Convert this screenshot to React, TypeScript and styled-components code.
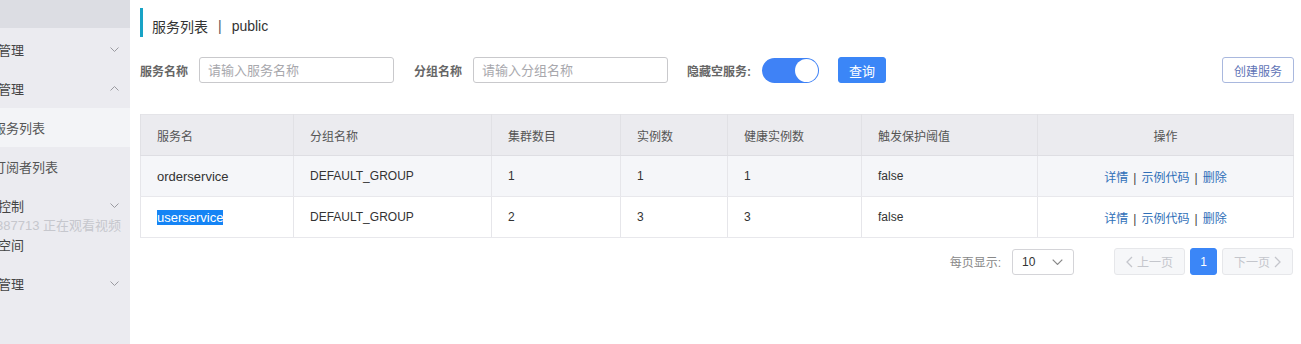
import styled, { createGlobalStyle } from "styled-components";

const GlobalStyle = createGlobalStyle`
  body {
    margin: 0;
    font-family: "Liberation Sans", "Noto Sans CJK SC", sans-serif;
    background: #fff;
  }
`;

const Page = styled.div`
  display: flex;
  height: 344px;
  overflow: hidden;
`;

const Sidebar = styled.div`
  position: relative;
  width: 130px;
  flex-shrink: 0;
  background: #ebebf0;
  overflow: hidden;
`;

const SideTop = styled.div`
  height: 28px;
  margin-bottom: 2px;
  background: #dcdde3;
`;

const MenuItem = styled.div<{ $sub?: boolean; $active?: boolean }>`
  height: 39px;
  display: flex;
  align-items: center;
  justify-content: space-between;
  padding-right: 11px;
  margin-left: ${(p) => (p.$sub ? "-7px" : "-28px")};
  background: ${(p) => (p.$active ? "#f3f4f7" : "transparent")};
  color: ${(p) => (p.$sub ? "#555" : "#444")};
  font-size: 13px;
  white-space: nowrap;
`;

const Watermark = styled.div`
  position: absolute;
  left: -4px;
  top: 215px;
  font-size: 13px;
  color: #c6c7cd;
  white-space: nowrap;
`;

const Main = styled.div`
  flex: 1;
  padding: 8px 7px 0 10px;
  min-width: 0;
`;

const Title = styled.div`
  height: 29px;
  box-sizing: border-box;
  padding: 6px 0 0 9px;
  display: flex;
  align-items: center;
  border-left: 3px solid #18a3c6;
  font-size: 14px;
  color: #333;
`;

const Sep = styled.span`
  margin: 0 10px;
  color: #555;
`;

const FilterRow = styled.div`
  display: flex;
  align-items: center;
  height: 26px;
  margin-top: 20px;
`;

const Label = styled.span<{ $gap?: number }>`
  font-size: 12px;
  font-weight: bold;
  color: #666;
  margin-left: ${(p) => p.$gap ?? 0}px;
  margin-right: 11px;
  white-space: nowrap;
`;

const Input = styled.input`
  width: 195px;
  height: 26px;
  box-sizing: border-box;
  border: 1px solid #c9c9cc;
  border-radius: 3px;
  padding: 0 8px;
  font-size: 13px;
  font-family: inherit;
  outline: none;
  &::placeholder {
    color: #a8a8ad;
  }
`;

const Switch = styled.div`
  width: 57px;
  height: 25px;
  box-sizing: border-box;
  border-radius: 13px;
  background: #3f82f6;
  display: flex;
  justify-content: flex-end;
  align-items: center;
  padding-right: 1px;
`;

const Knob = styled.div`
  width: 23px;
  height: 23px;
  border-radius: 50%;
  background: #fff;
`;

const Button = styled.button<{ $outline?: boolean }>`
  height: 26px;
  box-sizing: border-box;
  border-radius: 3px;
  font-size: 12px;
  font-family: inherit;
  padding: 0;
  cursor: pointer;
  background: ${(p) => (p.$outline ? "#fff" : "#3b86f7")};
  color: ${(p) => (p.$outline ? "#5f74b6" : "#fff")};
  border: 1px solid ${(p) => (p.$outline ? "#a9b8de" : "#3b86f7")};
`;

const SearchButton = styled(Button)`
  width: 48px;
  margin-left: 19px;
  font-size: 13px;
`;

const CreateButton = styled(Button)`
  width: 72px;
  margin-left: auto;
`;

const Table = styled.table`
  width: 100%;
  margin-top: 31px;
  border-collapse: collapse;
  table-layout: fixed;
  border: 1px solid #e4e4e8;
  font-size: 12px;
`;

const Th = styled.th<{ $center?: boolean }>`
  height: 40px;
  background: #ebebef;
  color: #555;
  font-weight: normal;
  text-align: ${(p) => (p.$center ? "center" : "left")};
  padding: 0 16px;
  border-left: 1px solid #e1e1e5;
  border-bottom: 1px solid #dedee3;
`;

const Tr = styled.tr<{ $hover?: boolean }>`
  background: ${(p) => (p.$hover ? "#f5f6f9" : "#fff")};
`;

const Td = styled.td<{ $center?: boolean }>`
  height: 40px;
  padding: 0 16px;
  color: #333;
  font-size: 12px;
  text-align: ${(p) => (p.$center ? "center" : "left")};
  border-left: 1px solid #e6e6ea;
  border-bottom: 1px solid #e8e8ec;
  white-space: nowrap;
`;

const NameCell = styled(Td)`
  font-size: 13px;
  padding-left: 16px;
`;

const Selected = styled.span`
  background: #1584f5;
  color: #fff;
`;

const Link = styled.a`
  color: #2f6fb8;
  text-decoration: none;
`;

const Bar = styled.span`
  color: #444;
  margin: 0 5px;
`;

const Pager = styled.div`
  display: flex;
  justify-content: flex-end;
  align-items: center;
  margin-top: 10px;
  padding-right: 1px;
`;

const PagerLabel = styled.span`
  font-size: 12px;
  color: #888;
  margin-right: 11px;
`;

const Select = styled.div`
  width: 62px;
  height: 26px;
  box-sizing: border-box;
  border: 1px solid #d4d4d8;
  border-radius: 3px;
  display: flex;
  align-items: center;
  justify-content: space-between;
  padding: 0 10px 0 9px;
  font-size: 12px;
  color: #333;
  margin-right: 35px;
`;

const PageButton = styled.div<{ $current?: boolean; $w: number }>`
  width: ${(p) => p.$w}px;
  height: 27px;
  box-sizing: border-box;
  margin-left: 5px;
  border-radius: 3px;
  display: flex;
  align-items: center;
  justify-content: center;
  gap: 4px;
  font-size: 12px;
  background: ${(p) => (p.$current ? "#3b86f7" : "#f6f7f9")};
  color: ${(p) => (p.$current ? "#fff" : "#c4c6cc")};
  border: 1px solid ${(p) => (p.$current ? "#3b86f7" : "#e6e7ea")};
`;

function Chevron({ up, color = "#9a9aa0", w = 9, h = 5 }: { up?: boolean; color?: string; w?: number; h?: number }) {
  return (
    <svg width={w} height={h} viewBox="0 0 9 5" fill="none">
      <polyline
        points={up ? "0.5,4.5 4.5,0.5 8.5,4.5" : "0.5,0.5 4.5,4.5 8.5,0.5"}
        stroke={color}
        strokeWidth="1"
      />
    </svg>
  );
}

function Arrow({ left }: { left?: boolean }) {
  return (
    <svg width="7" height="12" viewBox="0 0 7 12" fill="none">
      <polyline
        points={left ? "6,1 1,6 6,11" : "1,1 6,6 1,11"}
        stroke="#c4c6cc"
        strokeWidth="1.3"
      />
    </svg>
  );
}

const rows = [
  { name: "orderservice", group: "DEFAULT_GROUP", cluster: 1, inst: 1, healthy: 1, protect: "false", hover: true },
  { name: "userservice", group: "DEFAULT_GROUP", cluster: 2, inst: 3, healthy: 3, protect: "false", selected: true },
];

export default function App() {
  return (
    <>
      <GlobalStyle />
      <Page>
        <Sidebar>
          <SideTop />
          <MenuItem>
            <span>配置管理</span>
            <Chevron />
          </MenuItem>
          <MenuItem>
            <span>服务管理</span>
            <Chevron up />
          </MenuItem>
          <MenuItem $sub $active>
            <span>服务列表</span>
          </MenuItem>
          <MenuItem $sub>
            <span>订阅者列表</span>
          </MenuItem>
          <MenuItem>
            <span>权限控制</span>
            <Chevron />
          </MenuItem>
          <MenuItem>
            <span>命名空间</span>
          </MenuItem>
          <MenuItem>
            <span>集群管理</span>
            <Chevron />
          </MenuItem>
          <Watermark>387713 正在观看视频</Watermark>
        </Sidebar>
        <Main>
          <Title>
            服务列表<Sep>|</Sep>public
          </Title>
          <FilterRow>
            <Label>服务名称</Label>
            <Input placeholder="请输入服务名称" />
            <Label $gap={20}>分组名称</Label>
            <Input placeholder="请输入分组名称" />
            <Label $gap={19}>隐藏空服务:</Label>
            <Switch>
              <Knob />
            </Switch>
            <SearchButton>查询</SearchButton>
            <CreateButton $outline>创建服务</CreateButton>
          </FilterRow>
          <Table>
            <colgroup>
              <col style={{ width: 153 }} />
              <col style={{ width: 198 }} />
              <col style={{ width: 129 }} />
              <col style={{ width: 107 }} />
              <col style={{ width: 134 }} />
              <col style={{ width: 176 }} />
              <col />
            </colgroup>
            <thead>
              <tr>
                <Th>服务名</Th>
                <Th>分组名称</Th>
                <Th>集群数目</Th>
                <Th>实例数</Th>
                <Th>健康实例数</Th>
                <Th>触发保护阈值</Th>
                <Th $center>操作</Th>
              </tr>
            </thead>
            <tbody>
              {rows.map((r) => (
                <Tr key={r.name} $hover={r.hover}>
                  <NameCell>{r.selected ? <Selected>{r.name}</Selected> : r.name}</NameCell>
                  <Td>{r.group}</Td>
                  <Td>{r.cluster}</Td>
                  <Td>{r.inst}</Td>
                  <Td>{r.healthy}</Td>
                  <Td>{r.protect}</Td>
                  <Td $center>
                    <Link>详情</Link>
                    <Bar>|</Bar>
                    <Link>示例代码</Link>
                    <Bar>|</Bar>
                    <Link>删除</Link>
                  </Td>
                </Tr>
              ))}
            </tbody>
          </Table>
          <Pager>
            <PagerLabel>每页显示:</PagerLabel>
            <Select>
              <span>10</span>
              <Chevron color="#888" w={11} h={6} />
            </Select>
            <PageButton $w={71}>
              <Arrow left />
              上一页
            </PageButton>
            <PageButton $w={27} $current>
              1
            </PageButton>
            <PageButton $w={71}>
              下一页
              <Arrow />
            </PageButton>
          </Pager>
        </Main>
      </Page>
    </>
  );
}
